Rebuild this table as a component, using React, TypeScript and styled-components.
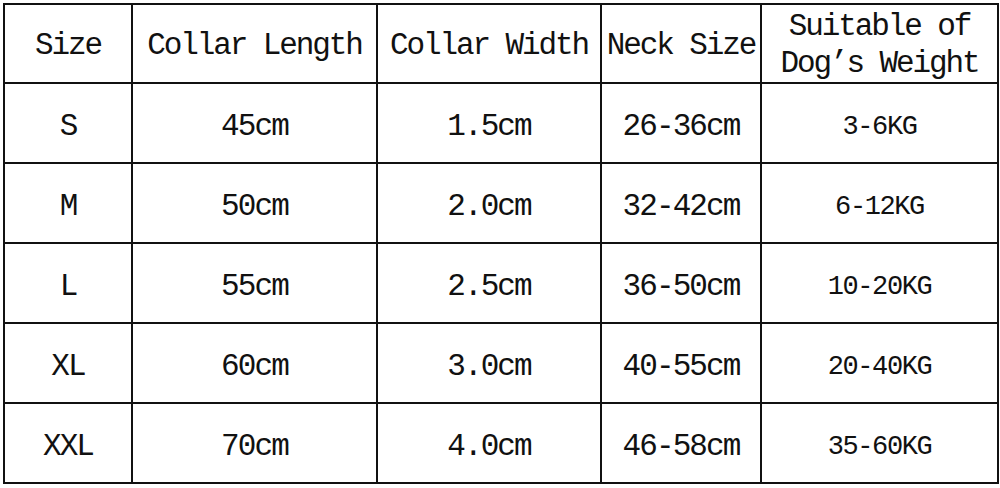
import React from "react";
import styled, { createGlobalStyle } from "styled-components";

const GlobalStyle = createGlobalStyle`
  html, body {
    margin: 0;
    padding: 0;
    background: #ffffff;
  }
  body {
    font-family: "Liberation Mono", "DejaVu Sans Mono", monospace;
    color: #000000;
  }
`;

const Page = styled.div`
  width: 1000px;
  height: 488px;
  padding: 3px 0 0 3px;
  box-sizing: border-box;
  background: #ffffff;
  overflow: hidden;
`;

const Table = styled.table`
  border-collapse: collapse;
  table-layout: fixed;
  width: 994px;
`;

const HeadCell = styled.th`
  border: 2px solid #111;
  height: 74px;
  padding: 3px 0 0;
  font-weight: normal;
  font-size: 31px;
  letter-spacing: -2.1px;
  line-height: 37px;
  text-align: center;
  vertical-align: middle;
  white-space: pre;
  color: #111;
`;

const Cell = styled.td<{ $small?: boolean }>`
  border: 2px solid #111;
  height: 71px;
  padding: 7px 0 0;
  font-size: ${(p) => (p.$small ? "27px" : "31px")};
  letter-spacing: ${(p) => (p.$small ? "-1.4px" : "-1.9px")};
  text-align: center;
  vertical-align: middle;
  color: #111;
`;

const headers = ["Size", "Collar Length", "Collar Width", "Neck Size", "Suitable of\nDog’s Weight"];
const widths = [128, 245, 224, 160, 237];

const rows = [
  ["S", "45cm", "1.5cm", "26-36cm", "3-6KG"],
  ["M", "50cm", "2.0cm", "32-42cm", "6-12KG"],
  ["L", "55cm", "2.5cm", "36-50cm", "10-20KG"],
  ["XL", "60cm", "3.0cm", "40-55cm", "20-40KG"],
  ["XXL", "70cm", "4.0cm", "46-58cm", "35-60KG"],
];

export default function App() {
  return (
    <>
      <GlobalStyle />
      <Page>
        <Table>
          <colgroup>
            {widths.map((w, i) => (
              <col key={i} style={{ width: w }} />
            ))}
          </colgroup>
          <thead>
            <tr>
              {headers.map((h) => (
                <HeadCell key={h}>{h}</HeadCell>
              ))}
            </tr>
          </thead>
          <tbody>
            {rows.map((r) => (
              <tr key={r[0]}>
                {r.map((c, i) => (
                  <Cell key={i} $small={i === 4}>
                    {c}
                  </Cell>
                ))}
              </tr>
            ))}
          </tbody>
        </Table>
      </Page>
    </>
  );
}
